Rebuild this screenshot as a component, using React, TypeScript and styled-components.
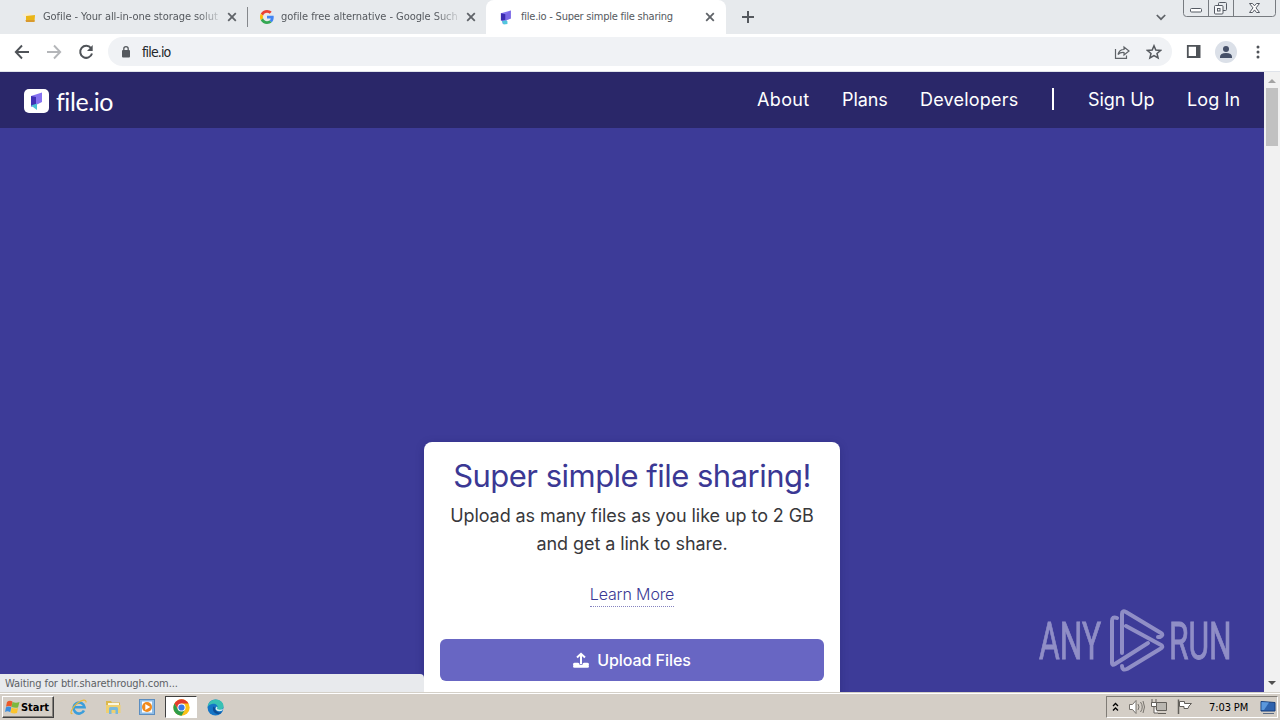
import styled, { createGlobalStyle } from 'styled-components';

const GlobalStyle = createGlobalStyle`
  * {
    box-sizing: border-box;
  }
  body {
    margin: 0;
    overflow: hidden;
    font-family: Inter, "Liberation Sans", sans-serif;
  }
  svg {
    display: block;
    flex-shrink: 0;
  }
`;

const Screen = styled.div`
  display: flex;
  flex-direction: column;
  width: 1280px;
  height: 720px;
  overflow: hidden;
  background-color: #fff;
`;

const TabStrip = styled.div`
  display: flex;
  height: 34px;
  padding-left: 8px;
  background-color: #e7eaed;
  font-family: "DejaVu Sans Condensed", "DejaVu Sans", sans-serif;
  font-stretch: condensed;
`;

const Tab = styled.div<{ $active?: boolean }>`
  position: relative;
  display: flex;
  align-items: center;
  width: ${({ $active }) => ($active ? 240 : 239)}px;
  height: 34px;
  padding: 0 ${({ $active }) => ($active ? 11 : 10)}px 0 13px;
  border-radius: 8px 8px 0 0;
  background-color: ${({ $active }) => ($active ? '#fff' : 'transparent')};
`;

const TabDivider = styled.div`
  width: 1px;
  height: 20px;
  margin: 7px -1px 0 0;
  background-color: #85888c;
`;

const TabTitle = styled.div<{ $spacing: number; $fade?: boolean }>`
  width: 178px;
  margin-left: 7px;
  white-space: nowrap;
  font-size: 11px;
  line-height: 16px;
  letter-spacing: ${({ $spacing }) => $spacing}px;
  color: #55595e;
  ${({ $fade }) => $fade && 'mask-image: linear-gradient(to right, #000 154px, transparent 182px);'}
`;

const TabClose = styled.div`
  margin-left: auto;
`;

const NewTab = styled.div`
  padding: 11px 0 0 16px;
`;

const WindowControls = styled.div`
  display: flex;
  align-items: flex-start;
  margin-left: auto;
  padding-right: 4px;
`;

const ChevronBox = styled.div`
  padding: 14px 17px 0 0;
`;

const Toolbar = styled.div`
  display: flex;
  align-items: center;
  height: 38px;
  padding: 0 14px 2px;
  border-bottom: 1px solid #dfe3ea;
`;

const NavIcons = styled.div`
  display: flex;
  gap: 16px;
  width: 94px;
`;

const AddressBar = styled.div`
  display: flex;
  align-items: center;
  width: 1064px;
  height: 29px;
  padding: 0 10px 0 12px;
  border-radius: 15px;
  background-color: #f0f2f5;
`;

const Url = styled.div`
  flex: 1;
  margin-left: 10px;
  padding-top: 1px;
  font-family: "DejaVu Sans Condensed", "DejaVu Sans", sans-serif;
  font-stretch: condensed;
  font-size: 14px;
  letter-spacing: -0.85px;
  color: #222529;
`;

const AddressIcons = styled.div`
  display: flex;
  gap: 16px;
`;

const ToolbarIcons = styled.div`
  display: flex;
  align-items: center;
  margin-left: 14px;
`;

const Viewport = styled.div`
  display: flex;
  height: 620px;
`;

const Page = styled.div`
  position: relative;
  display: flex;
  flex-direction: column;
  width: 1264px;
  overflow: hidden;
  background-color: #3d3b98;
`;

const SiteHeader = styled.div`
  display: flex;
  flex-shrink: 0;
  align-items: center;
  height: 56px;
  padding: 0 24px;
  background-color: #2a2769;
`;

const Brand = styled.div`
  display: flex;
  align-items: center;
  gap: 7px;
  padding-top: 2px;
  font-family: Lato, sans-serif;
  font-size: 25px;
  line-height: 28px;
  letter-spacing: -0.4px;
  color: #fff;
`;

const Menu = styled.div`
  display: flex;
  align-items: center;
  margin-left: auto;
  padding-bottom: 1px;
  color: #fff;
`;

const MenuLink = styled.div<{ $width: number; $gap?: number; $spacing?: number }>`
  width: ${({ $width }) => $width}px;
  margin-left: ${({ $gap = 0 }) => $gap}px;
  white-space: nowrap;
  font-size: 18px;
  letter-spacing: ${({ $spacing = 0.2 }) => $spacing}px;
`;

const MenuDivider = styled.div`
  width: 2px;
  height: 22px;
  margin: -1px 34px 0;
  background-color: #fff;
`;

const Card = styled.div`
  flex-shrink: 0;
  width: 416px;
  height: 300px;
  margin: 314px 0 0 424px;
  padding: 15px 16px;
  border-radius: 8px;
  background-color: #fff;
  box-shadow: 0 2px 8px rgba(20, 18, 80, 0.25);
  text-align: center;
`;

const Title = styled.div`
  font-size: 31px;
  line-height: 38px;
  letter-spacing: -0.52px;
  white-space: nowrap;
  color: #3b3894;
`;

const Lead = styled.div`
  margin-top: 7px;
  font-size: 18px;
  line-height: 28px;
  letter-spacing: -0.07px;
  white-space: nowrap;
  color: #38383b;
`;

const LearnMore = styled.span`
  display: inline-block;
  height: 24px;
  margin-top: 25px;
  border-bottom: 1px dotted #8583c0;
  font-size: 16px;
  line-height: 22px;
  font-weight: 300;
  letter-spacing: -0.12px;
  color: #3b3894;
`;

const UploadButton = styled.div`
  display: flex;
  align-items: center;
  justify-content: center;
  gap: 8px;
  height: 42px;
  margin-top: 32px;
  border-radius: 6px;
  background-color: #6866c3;
  font-size: 16px;
  font-weight: 500;
  letter-spacing: -0.05px;
  color: #fff;
`;

const StatusBubble = styled.div`
  position: absolute;
  left: 0;
  bottom: 0;
  width: 424px;
  height: 18px;
  padding-left: 5px;
  border-radius: 0 4px 0 0;
  background-color: #e8eaed;
  font-family: "DejaVu Sans Condensed", "DejaVu Sans", sans-serif;
  font-stretch: condensed;
  font-size: 11px;
  line-height: 19px;
  letter-spacing: -0.09px;
  color: #5c6064;
`;

const Watermark = styled.div`
  position: absolute;
  left: 1036px;
  bottom: 16px;
`;

const Scrollbar = styled.div`
  display: flex;
  flex-direction: column;
  align-items: center;
  justify-content: space-between;
  width: 16px;
  background-color: #f1f1f1;
`;

const Thumb = styled.div`
  width: 12px;
  height: 58px;
  margin-bottom: auto;
  background-color: #c1c1c1;
`;

const Taskbar = styled.div`
  display: flex;
  align-items: center;
  height: 28px;
  padding: 1px 2px 0;
  border-top: 1px solid #d4d0c8;
  box-shadow: inset 0 1px 0 #fff;
  background-color: #d4cec6;
  font-family: "DejaVu Sans Condensed", "DejaVu Sans", sans-serif;
  font-stretch: condensed;
  font-size: 11px;
  color: #000;
`;

const StartButton = styled.div`
  display: flex;
  align-items: center;
  gap: 1px;
  width: 52px;
  height: 22px;
  padding-left: 2px;
  border: 1px solid;
  border-color: #fff #404040 #404040 #fff;
  box-shadow: inset -1px -1px 0 #86827c;
  font-weight: bold;
  letter-spacing: -0.05px;
`;

const QuickLaunch = styled.div`
  display: flex;
  align-items: center;
  margin-left: 8px;
`;

const TaskIcon = styled.div<{ $active?: boolean }>`
  display: flex;
  align-items: center;
  justify-content: center;
  width: 34px;
  height: 22px;
  ${({ $active }) => $active && `
    width: 32px;
    margin: 0 1px;
    border: 1px solid;
    border-color: #404040 #fff #fff #404040;
    background-color: #fff;
  `}
`;

const Tray = styled.div`
  display: flex;
  align-items: center;
  width: 172px;
  height: 22px;
  margin-left: auto;
  padding-left: 5px;
  border: 1px solid;
  border-color: #807c76 #fff #fff #807c76;
`;

const Clock = styled.div`
  width: 42px;
  margin: 0 9px 0 15px;
  letter-spacing: -0.1px;
  white-space: nowrap;
`;

const CloseIcon = () => (
  <svg width="10" height="10" viewBox="0 0 10 10" stroke="#5f6368" strokeWidth="1.8">
    <path d="M1.2 1.2 8.8 8.8M8.8 1.2 1.2 8.8" />
  </svg>
);

const FileMark = ({ size }: { size: number }) => (
  <svg width={size} height={size} viewBox="0 0 16 16">
    <path d="M2 3.500 12.500.5V9L8 11v3l-4 1z" fill="#8472f0" />
    <path d="M2 3.500 7 4.500v6l-5 1z" fill="#3b2bb0" />
    <path d="M7 4.500 12.500.5V9L7 11z" fill="#7a68e4" />
    <path d="M3 12 7 11l2 1v3l-4 .5z" fill="#52c7dd" />
  </svg>
);

const GoogleIcon = () => (
  <svg width="14" height="14" viewBox="0 0 48 48">
    <path fill="#EA4335" d="M24 9.500c3.540 0 6.710 1.220 9.210 3.600l6.850-6.850C35.900 2.380 30.470 0 24 0 14.620 0 6.510 5.380 2.560 13.220l7.980 6.190C12.430 13.720 17.740 9.500 24 9.500z" />
    <path fill="#4285F4" d="M46.980 24.550c0-1.570-.15-3.090-.38-4.550H24v9.020h12.940c-.58 2.960-2.260 5.480-4.780 7.180l7.730 6c4.510-4.180 7.090-10.360 7.090-17.650z" />
    <path fill="#FBBC05" d="M10.530 28.590c-.48-1.450-.76-2.990-.76-4.590s.27-3.140.76-4.590l-7.980-6.190C.92 16.460 0 20.120 0 24s.92 7.540 2.560 10.780z" />
    <path fill="#34A853" d="M24 48c6.480 0 11.930-2.130 15.890-5.810l-7.730-6c-2.150 1.450-4.920 2.300-8.160 2.300-6.260 0-11.570-4.220-13.470-9.910l-7.980 6.190C6.510 42.620 14.620 48 24 48z" />
  </svg>
);

const GofileIcon = () => (
  <svg width="15" height="16" viewBox="0 0 15 16">
    <path d="M1 5 9 4 11 6 3 8z" fill="#f7ecd0" />
    <path d="M5 7 14 6 13.500 12.500 5 13z" fill="#eab516" />
    <path d="M4.500 11 13.500 11 13.500 13 5 13z" fill="#d99a2e" />
  </svg>
);

const WindowButtons = () => (
  <svg width="93" height="18" viewBox="0 0 93 18" fill="none" stroke="#777b80">
    <path d="M.5 0V13.500Q.5 16.500 3.500 16.500H89.500Q92.500 16.500 92.500 13.500V0M25.500 0V16M50.500 0V16" />
    <g stroke="#555a63">
      <rect x="7.500" y="8.500" width="11" height="3.500" rx="1" fill="#fff" />
      <rect x="35.500" y="2.500" width="8" height="8" rx="1" />
      <rect x="31.500" y="5.500" width="8.500" height="8.500" rx="1" fill="#f7f8fa" />
      <rect x="34.500" y="8.500" width="2.500" height="2.500" />
      <path d="M66.500 3.500h3l2 2.300 2-2.300h3l-3.500 4.400 3.500 4.600h-3l-2-2.600-2 2.600h-3l3.500-4.600z" fill="#fff" />
    </g>
  </svg>
);

const ChromeIcon = () => (
  <svg width="17" height="17" viewBox="0 0 48 48">
    <circle cx="24" cy="24" r="23" fill="#fbc116" />
    <path d="M4.100 12.500A23 23 0 0 1 43.900 12.500H24L14 29.800z" fill="#e33b2e" />
    <path d="M4.100 12.500A23 23 0 0 0 24 47L34 29.800 14 29.800z" fill="#2d9c4a" />
    <circle cx="24" cy="24" r="11.500" fill="#fff" />
    <circle cx="24" cy="24" r="8.800" fill="#3a79e8" />
  </svg>
);

const EdgeIcon = () => (
  <svg width="17" height="17" viewBox="0 0 17 17">
    <circle cx="8.500" cy="8.500" r="8" fill="#1575c6" />
    <path d="M.6 8C1 3.500 4.500.5 8.800.5c4.500 0 7.700 3 7.700 6.500 0 3-2.300 4.200-5 4-1.500-.1-2.200-.8-1.200-2C11.500 6 8 4.200 5 5 2.500 5.500 1.200 6.500.6 8z" fill="#38c1b4" />
    <path d="M6.500 7.500c-2 3.500 1 8 5.500 7.400 1.200-.2 2.200-.8 3-1.700-3.700 1-6.800-.9-6.500-4z" fill="#0d4c94" />
    <path d="M9.500 7.500c1.800 1 .7 1.400.5 2 .2 1.300 3.500 1.700 6 .3l-.8 2c-4.200 1-7-.3-6.700-2.500z" fill="#d4f0f2" />
  </svg>
);

const IeIcon = () => (
  <svg width="18" height="18" viewBox="0 0 18 18" fill="none">
    <path d="M14 12.500A5.500 5.500 0 1 1 14.500 9.300H4.500" stroke="#3b9edb" strokeWidth="2.600" />
    <path d="M2.500 15.500C-1 16.500 2 9.500 7 5.500S16.500 1 16 4.500" stroke="#e9b93c" strokeWidth="1.200" />
  </svg>
);

const FolderIcon = () => (
  <svg width="17" height="16" viewBox="0 0 17 16">
    <path d="M1 2h5l1 1.500h8V14H1z" fill="#dcb84c" />
    <path d="M3 4h11v3H3z" fill="#fbf7df" />
    <path d="M1 6h14.500V14H1z" fill="#efd070" />
    <path d="M4 15V9.500Q4 8 5.500 8h6Q13 8 13 9.500V15h-2.500v-4h-4v4z" fill="#78b8dc" />
  </svg>
);

const PlayerIcon = () => (
  <svg width="17" height="17" viewBox="0 0 17 17">
    <rect x=".5" y=".5" width="15" height="15" fill="#8fbde6" stroke="#5b8dc0" />
    <rect x="3" y="2.500" width="10" height="11" fill="#fff" />
    <circle cx="8" cy="8" r="5" fill="#f08a1c" />
    <path d="M6.300 5v6l5-3z" fill="#fff" />
  </svg>
);

const AnyRunMark = () => (
  <svg width="200" height="70" viewBox="0 0 200 70" opacity=".5">
    <g fill="#e2e1f4" stroke="#e2e1f4" strokeWidth=".8" fontFamily="Roboto, sans-serif" fontSize="51">
      <text transform="translate(3 53) scale(.64 1)" textLength="97" lengthAdjust="spacingAndGlyphs">ANY</text>
      <text transform="translate(133 53) scale(.64 1)" textLength="98" lengthAdjust="spacingAndGlyphs">RUN</text>
    </g>
    <g fill="none" stroke="#e2e1f4" strokeWidth="4" strokeLinejoin="round" strokeLinecap="round">
      <path d="M81 12Q76 10 76 15V57Q76 60 79 58L112 37" />
      <path d="M86 47V8Q86 4 90 6L125 27Q128 29 124 31L122 31" />
      <path d="M90 20 125 39Q128 41 124 43L91 63Q86 65 86 60" />
    </g>
  </svg>
);

const App = () => {
  return (
    <>
      <GlobalStyle />
      <Screen>
        <TabStrip>
          <Tab>
            <GofileIcon />
            <TabTitle $spacing={-0.06} $fade>Gofile - Your all-in-one storage solut</TabTitle>
            <TabClose><CloseIcon /></TabClose>
          </Tab>
          <TabDivider />
          <Tab>
            <GoogleIcon />
            <TabTitle $spacing={-0.06} $fade>gofile free alternative - Google Such</TabTitle>
            <TabClose><CloseIcon /></TabClose>
          </Tab>
          <Tab $active>
            <FileMark size={15} />
            <TabTitle $spacing={-0.23}>file.io - Super simple file sharing</TabTitle>
            <TabClose><CloseIcon /></TabClose>
          </Tab>
          <NewTab>
            <svg width="12" height="12" stroke="#55595e" strokeWidth="2"><path d="M6 0V12M0 6H12" /></svg>
          </NewTab>
          <WindowControls>
            <ChevronBox>
              <svg width="10" height="7" fill="none" stroke="#5f6368" strokeWidth="1.700"><path d="M.8 1 5 5.200 9.200 1" /></svg>
            </ChevronBox>
            <WindowButtons />
          </WindowControls>
        </TabStrip>
        <Toolbar>
          <NavIcons>
            <svg width="16" height="16" fill="none" stroke="#4f5358" strokeWidth="1.900"><path d="M15 8H2M8 1.500 1.800 8 8 14.500" /></svg>
            <svg width="16" height="16" fill="none" stroke="#b4b6b9" strokeWidth="1.900"><path d="M1 8H14M8 1.500 14.200 8 8 14.500" /></svg>
            <svg width="16" height="16" fill="none" stroke="#4f5358" strokeWidth="2"><path d="M13 4.200A6 6 0 1 0 14 9.500" /><path d="M14.700 1V7H9z" fill="#4f5358" stroke="none" /></svg>
          </NavIcons>
          <AddressBar>
            <svg width="12" height="14" viewBox="0 0 12 14"><rect x="2" y="5" width="8" height="7.500" rx="1" fill="#55595e" /><path d="M3.800 6V3.800a2.200 2.200 0 0 1 4.400 0V6" fill="none" stroke="#55595e" strokeWidth="1.300" /></svg>
            <Url>file.io</Url>
            <AddressIcons>
              <svg width="16" height="16" fill="none" stroke="#5f6368" strokeWidth="1.200"><path d="M1.500 5V14.300H12.500V11.500M4 10.500C5 6.500 7 5.500 10 5.500V3L15 7 10 11V8.500C7.500 8.300 5.500 8.800 4 10.500z" /></svg>
              <svg width="16" height="16" fill="none" stroke="#55595e" strokeWidth="1.500"><path d="M8 1.800 9.800 6.100 14.500 6.500 11 9.500 12.100 14 8 11.600 3.900 14 5 9.500 1.500 6.500 6.200 6.100z" /></svg>
            </AddressIcons>
          </AddressBar>
          <ToolbarIcons>
            <svg width="15" height="15"><path d="M1.800 1.800H13V13H1.800z" fill="#fff" stroke="#4f5358" strokeWidth="1.800" /><path d="M10 1h4.500v13H10z" fill="#4f5358" /></svg>
            <svg width="55" height="24"><circle cx="25" cy="12" r="11" fill="#dbe0e8" /><circle cx="25" cy="9" r="3" fill="#465068" /><path d="M19 17Q19 13 25 13T31 17V18H19z" fill="#465068" /></svg>
            <svg width="4" height="14" fill="#4f5358"><circle cx="2" cy="2" r="1.500" /><circle cx="2" cy="7" r="1.500" /><circle cx="2" cy="12" r="1.500" /></svg>
          </ToolbarIcons>
        </Toolbar>
        <Viewport>
          <Page>
            <SiteHeader>
              <Brand>
                <svg width="25" height="25" viewBox="0 0 25 25">
                  <rect width="25" height="24" rx="5" fill="#fff" />
                  <path d="M7 7 18 3.500v9.500l-6 3-5 2z" fill="#8672f0" />
                  <path d="M7 7 12 8v8l-5 1z" fill="#4031b5" />
                  <path d="M7 16.500 13 14.500V21z" fill="#4bc3d3" />
                </svg>
                file.io
              </Brand>
              <Menu>
                <MenuLink $width={53} $spacing={0.35}>About</MenuLink>
                <MenuLink $width={45} $gap={32} $spacing={-0.1}>Plans</MenuLink>
                <MenuLink $width={98} $gap={33}>Developers</MenuLink>
                <MenuDivider />
                <MenuLink $width={66} $spacing={-0.1}>Sign Up</MenuLink>
                <MenuLink $width={53} $gap={33} $spacing={0.1}>Log In</MenuLink>
              </Menu>
            </SiteHeader>
            <Card>
              <Title>Super simple file sharing!</Title>
              <Lead>Upload as many files as you like up to 2 GB<br />and get a link to share.</Lead>
              <LearnMore>Learn More</LearnMore>
              <UploadButton>
                <svg width="16" height="17" fill="none" stroke="#fff" strokeWidth="2"><path d="M8 12V2M4 5.500 8 1.800 12 5.500" /><path d="M1.500 12.200H5M11 12.200H14.500M1.500 14.300H14.500" strokeWidth="3" strokeLinecap="round" /></svg>
                Upload Files
              </UploadButton>
            </Card>
            <StatusBubble>Waiting for btlr.sharethrough.com...</StatusBubble>
            <Watermark><AnyRunMark /></Watermark>
          </Page>
          <Scrollbar>
            <svg width="16" height="16"><path d="M4 11 8 7 12 11z" fill="#a3a3a3" /></svg>
            <Thumb />
            <svg width="16" height="16"><path d="M4 5 8 9 12 5z" fill="#505050" /></svg>
          </Scrollbar>
        </Viewport>
        <Taskbar>
          <StartButton>
            <svg width="15" height="16" viewBox="0 0 15 16">
              <path d="M2 3Q4.500 1 7.500 2.500L6.500 7.800Q3.500 6 1 7.800z" fill="#ec5a29" />
              <path d="M7.500 3Q11 4.500 14.500 3L13 8.500Q10 9.300 6.500 8z" fill="#7cb83d" />
              <path d="M1 8.200Q3.500 7 6.300 8.300L5.300 13.300Q2.500 11.500 0 13z" fill="#3c8ede" />
              <path d="M6.500 8.700Q10 10.200 13 9L12 14Q9 15 5.500 13.500z" fill="#fbc42e" />
            </svg>
            Start
          </StartButton>
          <QuickLaunch>
            <TaskIcon><IeIcon /></TaskIcon>
            <TaskIcon><FolderIcon /></TaskIcon>
            <TaskIcon><PlayerIcon /></TaskIcon>
            <TaskIcon $active><ChromeIcon /></TaskIcon>
            <TaskIcon><EdgeIcon /></TaskIcon>
          </QuickLaunch>
          <Tray>
            <svg width="8" height="12" fill="none" stroke="#000" strokeWidth="1.300"><path d="M1 5 3.500 2.500 6 5M1 9.500 3.500 7 6 9.500" /></svg>
            <svg width="26" height="18" fill="none" stroke="#77736d"><path d="M9.500 6.500h3L16 2.500v13l-3.500-4h-3z" fill="#fff" /><path d="M18 6q2 3 0 6M20.500 4q3.500 5 0 10M23 3q3 6 0 12" /></svg>
            <svg width="24" height="18" fill="none" stroke="#625f5a"><path d="M10.500 4.500h10v8h-10z" fill="#b9b6b0" /><path d="M12 15.500h8" /><path d="M6 1v4M10 1v4M5.500 4.500h5v4h-5zM8 9v6h4" fill="#fff" /></svg>
            <svg width="24" height="18" stroke="#625f5a"><path d="M8.500 1.500V16" strokeWidth="1.500" /><path d="M9.500 3.500h5v2h7L19 8l-1 2.500h-4v-2H9.500z" fill="#fff" /></svg>
            <Clock>7:03 PM</Clock>
            <svg width="17" height="16"><path d="M1 2.500 15 3.500V12H1z" fill="#2e62ad" stroke="#173f7c" /><path d="M1.500 3 9 3.500 4 11H1.500z" fill="#5b97dc" /><path d="M3 14.500H14" stroke="#5a6b84" /></svg>
          </Tray>
        </Taskbar>
      </Screen>
    </>
  );
};

export default App;
